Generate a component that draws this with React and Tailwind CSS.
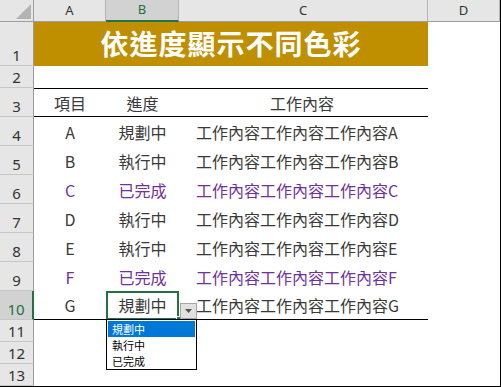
import React from 'react';

const cjk = "font-['Noto_Sans_CJK_TC',sans-serif]";

const items = [
  { id: 'A', status: '規劃中' },
  { id: 'B', status: '執行中' },
  { id: 'C', status: '已完成', done: true },
  { id: 'D', status: '執行中' },
  { id: 'E', status: '執行中' },
  { id: 'F', status: '已完成', done: true },
  { id: 'G', status: '規劃中', active: true },
];

const RowHead = ({ num, selected }) => (
  <div
    className={`w-[34px] shrink-0 flex items-end justify-center pb-[2px] border-b border-r border-b-[#c6c6c6] text-[15px] leading-none font-['Noto_Sans',sans-serif] ${
      selected ? 'bg-[#d2d2d2] border-r-2 border-r-[#217346] text-[#217346]' : 'bg-[#e6e6e6] border-r-[#9d9d9d] text-[#333]'
    }`}
  >
    {num}
  </div>
);

const ColHead = ({ label, w, selected }) => (
  <div
    className={`${w} shrink-0 flex items-center justify-center text-[13px] font-['Noto_Sans',sans-serif] border-r border-r-[#b4b4b4] ${
      selected ? 'bg-[#d2d2d2] text-[#217346] border-b-2 border-b-[#217346]' : 'bg-[#e6e6e6] text-[#333] border-b border-b-[#9d9d9d]'
    }`}
  >
    {label}
  </div>
);

const Dropdown = () => (
  <div className={`absolute left-0 top-full w-[91px] bg-white border border-black z-20 text-[11px] ${cjk}`}>
    <div className="h-[16px] flex items-center bg-[#0078d7] text-white pl-[4px] mx-px mt-px">規劃中</div>
    <div className="h-[16px] flex items-center text-black pl-[5px]">執行中</div>
    <div className="h-[16px] flex items-center text-black pl-[5px]">已完成</div>
  </div>
);

export default function App() {
  return (
    <div className="w-[501px] h-[387px] overflow-hidden bg-white border-r border-b border-black flex flex-col">
      {/* column headers */}
      <div className="flex h-[22px] shrink-0">
        <div className="w-[34px] shrink-0 bg-[#e6e6e6] border-r border-b border-[#9d9d9d] flex items-end justify-end pr-[2px] pb-[2px]">
          <svg width="15" height="15" viewBox="0 0 15 15">
            <polygon points="0,15 15,15 15,0" fill="#b3b3b3" />
          </svg>
        </div>
        <ColHead label="A" w="w-[72px]" />
        <ColHead label="B" w="w-[73px]" selected />
        <ColHead label="C" w="w-[249px]" />
        <ColHead label="D" w="flex-1" />
      </div>

      {/* row 1 title */}
      <div className="flex h-[44px] shrink-0">
        <RowHead num="1" />
        <div className={`w-[394px] bg-[#bf8f00] text-white font-bold text-[28px] leading-none tracking-[1px] flex items-center justify-center pb-[3px] ${cjk}`}>
          依進度顯示不同色彩
        </div>
        <div className="flex-1" />
      </div>

      {/* row 2 */}
      <div className="flex h-[22px] shrink-0">
        <RowHead num="2" />
        <div className="flex-1" />
      </div>

      {/* row 3 header */}
      <div className={`flex h-[29px] shrink-0 text-[16px] text-[#3a3a3a] ${cjk}`}>
        <RowHead num="3" />
        <div className="w-[394px] flex border-y border-black">
          <div className="w-[72px] flex items-center justify-center">項目</div>
          <div className="w-[73px] flex items-center justify-center">進度</div>
          <div className="w-[249px] flex items-center justify-center pr-[3px]">工作內容</div>
        </div>
        <div className="flex-1" />
      </div>

      {/* data rows */}
      {items.map((it, i) => {
        const color = it.done ? 'text-[#7030a0]' : 'text-[#3a3a3a]';
        const last = i === items.length - 1;
        return (
          <div key={it.id} className={`flex h-[29px] shrink-0 text-[16px] ${color} ${cjk}`}>
            <RowHead num={i + 4} selected={it.active} />
            <div className={`w-[394px] flex ${last ? 'border-b border-black' : ''}`}>
              <div className="w-[72px] flex items-center justify-center">{it.id}</div>
              <div className={`w-[73px] flex items-center justify-center relative ${it.active ? 'z-10' : ''}`}>
                {it.status}
                {it.active && (
                  <>
                    <div className="absolute inset-0 -bottom-px border-2 border-[#217346]" />
                    <div className="absolute right-[-3px] bottom-[-3px] w-[6px] h-[6px] bg-[#217346] border border-white" />
                    <div className="absolute left-[74px] top-[12px] w-[17px] h-[16px] bg-[#e1e1e1] border border-[#a6a6a6] flex items-center justify-center">
                      <svg width="7" height="4" viewBox="0 0 7 4">
                        <polygon points="0,0 7,0 3.5,4" fill="#555" />
                      </svg>
                    </div>
                    <Dropdown />
                  </>
                )}
              </div>
              <div className="w-[249px] flex items-center pl-[17px]">工作內容工作內容工作內容{it.id}</div>
            </div>
            <div className="flex-1" />
          </div>
        );
      })}

      {/* empty rows */}
      {[11, 12, 13].map((n) => (
        <div key={n} className="flex h-[22px] shrink-0">
          <RowHead num={n} />
          <div className="flex-1" />
        </div>
      ))}
    </div>
  );
}
